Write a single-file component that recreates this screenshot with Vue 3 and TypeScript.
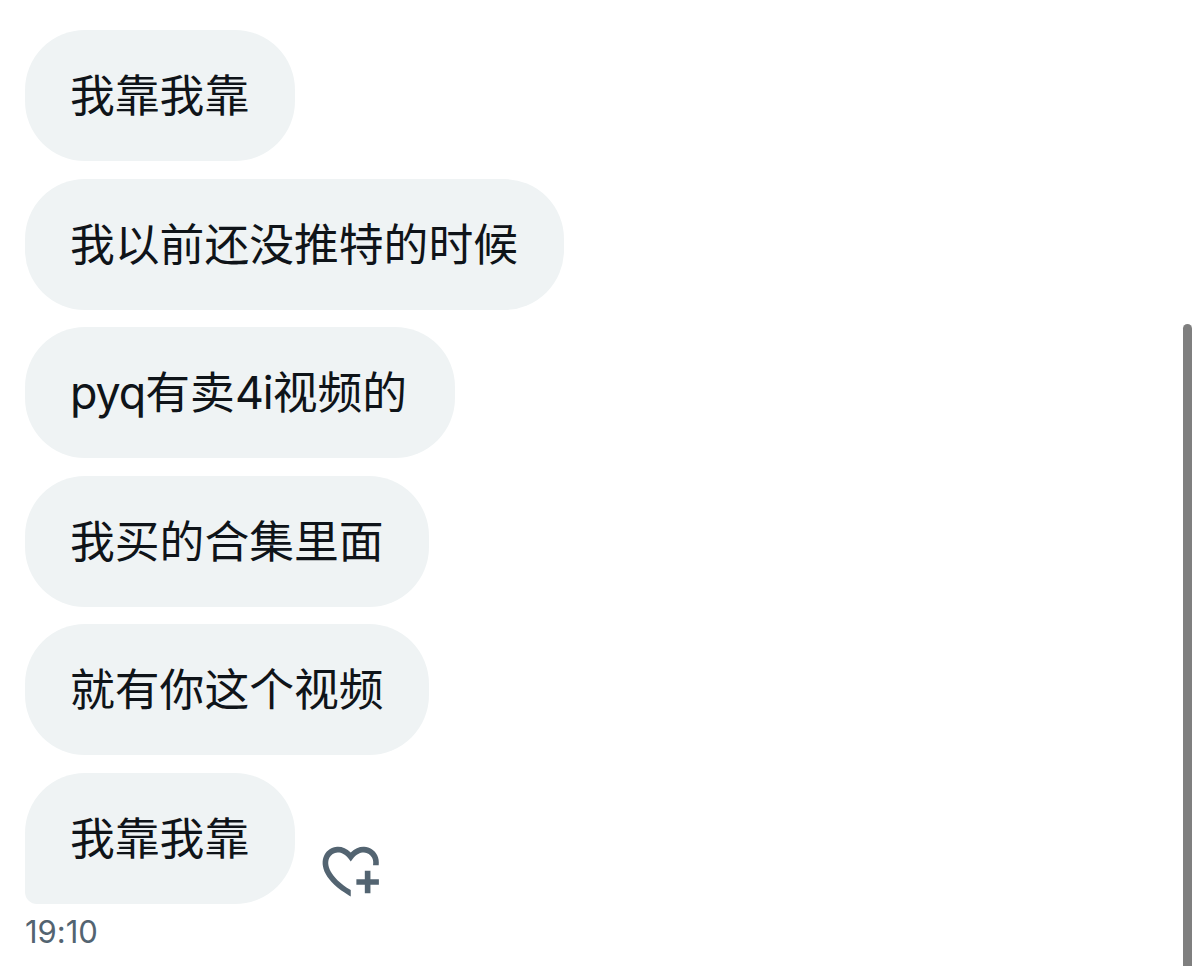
<script setup lang="ts">
interface Message {
  id: number
  runs: string[]
  width: number
}

const messages: Message[] = [
  { id: 1, runs: ['我靠我靠'], width: 269.5 },
  { id: 2, runs: ['我以前还没推特的时候'], width: 538.5 },
  { id: 3, runs: ['pyq', '有卖', '4i', '视频的'], width: 429.5 },
  { id: 4, runs: ['我买的合集里面'], width: 404 },
  { id: 5, runs: ['就有你这个视频'], width: 404 },
  { id: 6, runs: ['我靠我靠'], width: 269.5 },
]

const isLatin = (run: string): boolean => /^[\x20-\x7e]+$/.test(run)
</script>

<template>
  <main class="chat">
    <div v-for="(m, i) in messages" :key="m.id" class="row">
      <div class="bubble" :class="{ last: i === messages.length - 1 }" :style="{ width: m.width + 'px' }">
        <span v-for="run in m.runs" :key="run" :class="{ latin: isLatin(run) }">{{ run }}</span>
      </div>
      <button v-if="i === messages.length - 1" class="react" aria-label="React">
        <svg viewBox="0 0 24 24" width="67.5" height="67.5" fill="#536471">
          <path d="M17 12v3h-2.998v2h3v3h2v-3h3v-2h-3.001v-3H17zm-5 6.839c-3.871-2.34-6.053-4.639-7.127-6.609-1.112-2.04-1.031-3.7-.479-4.82.561-1.13 1.667-1.84 2.91-1.91 1.222-.06 2.68.51 3.892 2.16l.806 1.09.805-1.09c1.211-1.65 2.668-2.22 3.89-2.16 1.242.07 2.347.78 2.908 1.91.334.677.49 1.554.321 2.59h2.011c.153-1.283-.039-2.469-.539-3.48-.887-1.79-2.647-2.91-4.601-3.01-1.65-.09-3.367.56-4.796 2.01-1.43-1.45-3.147-2.1-4.798-2.01-1.954.1-3.714 1.22-4.601 3.01-.896 1.81-.846 4.17.514 6.67 1.353 2.48 4.003 5.12 8.382 7.67l.502.299v-2.32z" />
        </svg>
      </button>
    </div>
    <time class="time">19:10</time>
    <div class="scrollbar"></div>
  </main>
</template>

<style scoped>
.chat {
  position: relative;
  box-sizing: border-box;
  height: 966px;
  padding: 30px 0 0 25px;
  overflow: hidden;
  background: #fff;
  font-family: Inter, "Noto Sans CJK SC", sans-serif;
}
.row {
  display: flex;
  align-items: flex-end;
  height: 131px;
  margin-bottom: 17.5px;
}
.bubble {
  display: flex;
  box-sizing: border-box;
  height: 131px;
  padding-left: 45px;
  border-radius: 60px;
  background: #eff3f4;
  color: #0f1419;
  font-size: 44.8px;
  line-height: 133px;
  white-space: nowrap;
}
.bubble.last {
  border-bottom-left-radius: 12px;
}
.latin {
  letter-spacing: -1px;
}
.react {
  display: flex;
  margin: 0 0 -1px 22px;
  padding: 0;
  border: 0;
  background: none;
}
.time {
  display: block;
  margin-top: -8px;
  color: #536471;
  font-size: 31px;
  font-feature-settings: "calt" 0;
  line-height: 38px;
}
.scrollbar {
  position: absolute;
  top: 324px;
  left: 1183px;
  width: 9px;
  height: 660px;
  border-radius: 5px;
  background: #7f7f7f;
}
</style>

<style>
body {
  margin: 0;
  overflow: hidden;
}
</style>
